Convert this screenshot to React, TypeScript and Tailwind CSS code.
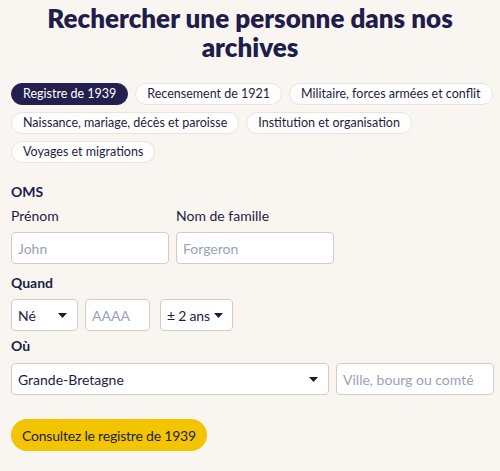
import React from 'react';

const categories = [
  'Registre de 1939',
  'Recensement de 1921',
  'Militaire, forces armées et conflit',
  'Naissance, mariage, décès et paroisse',
  'Institution et organisation',
  'Voyages et migrations',
];

function Caret() {
  return (
    <svg width="9" height="5" viewBox="0 0 9 5" className="shrink-0">
      <path d="M0 0 L9 0 L4.5 5 Z" fill="#1c1a3a" />
    </svg>
  );
}

function FakeSelect({ value, className }: { value: string; className: string }) {
  return (
    <div
      className={`flex h-8 shrink-0 items-center justify-between gap-1 rounded border border-[#d4cdc7] bg-white pl-[6px] pr-[10px] text-[14px] text-[#1f1c3f] ${className}`}
    >
      <span className="whitespace-nowrap">{value}</span>
      <Caret />
    </div>
  );
}

export default function App() {
  const active = 0;

  return (
    <div
      className="min-h-screen bg-[#f9f6f2] pl-[11px] pr-[7px] pt-[4px] text-[#201d4d]"
      style={{ fontFamily: 'Lato, "Open Sans", sans-serif' }}
    >
      <h1 className="pr-[4px] text-center text-[26px] font-extrabold leading-[29px] text-[#211d4b]">
        Rechercher une personne dans nos
        <br />
        archives
      </h1>

      <div className="mt-[21px] flex flex-wrap gap-[7px]">
        {categories.map((c, i) => (
          <button
            key={c}
            className={`h-[22px] rounded-full border px-[11px] text-[12.5px] leading-none ${
              i === active
                ? 'border-[#231f4f] bg-[#231f4f] text-white'
                : 'border-[#e8e3de] bg-white text-[#1f1c3f]'
            }`}
          >
            {c}
          </button>
        ))}
      </div>

      <form className="mt-[19px]">
        <div className="text-[14px] font-bold leading-5">OMS</div>
        <div className="mt-[4px] flex gap-[7px]">
          <div className="w-[158px]">
            <label className="block text-[14px] leading-5 text-[#1f1c3f]">Prénom</label>
            <input
              placeholder="John"
              className="mt-[6px] h-8 w-full rounded border border-[#d4cdc7] bg-white px-[6px] text-[14px] placeholder:text-[#9aa2b6] focus:outline-none"
            />
          </div>
          <div className="w-[158px]">
            <label className="block text-[14px] leading-5 text-[#1f1c3f]">Nom de famille</label>
            <input
              placeholder="Forgeron"
              className="mt-[6px] h-8 w-full rounded border border-[#d4cdc7] bg-white px-[6px] text-[14px] placeholder:text-[#9aa2b6] focus:outline-none"
            />
          </div>
        </div>

        <div className="mt-[9px] text-[14px] font-bold leading-5">Quand</div>
        <div className="mt-[6px] flex items-center">
          <FakeSelect value="Né" className="w-[67px]" />
          <input
            placeholder="AAAA"
            className="ml-[7px] h-8 w-[65px] rounded border border-[#d4cdc7] bg-white px-[6px] text-[14px] placeholder:text-[#9aa2b6] focus:outline-none"
          />
          <FakeSelect value="± 2 ans" className="ml-[10px] w-[73px] !pr-[9px] tracking-[-0.2px]" />
        </div>

        <div className="mt-[5px] text-[14px] font-bold leading-5">Où</div>
        <div className="mt-[7px] flex gap-[7px]">
          <FakeSelect value="Grande-Bretagne" className="w-[318px]" />
          <input
            placeholder="Ville, bourg ou comté"
            className="h-8 w-[158px] shrink-0 rounded border border-[#d4cdc7] bg-white px-[6px] text-[14px] placeholder:text-[#9aa2b6] focus:outline-none"
          />
        </div>

        <button
          type="button"
          className="mt-[24px] h-8 rounded-full bg-[#f2c500] px-[11px] text-[14px] tracking-[-0.2px] text-[#1f1c3f]"
        >
          Consultez le registre de 1939
        </button>
      </form>
    </div>
  );
}
